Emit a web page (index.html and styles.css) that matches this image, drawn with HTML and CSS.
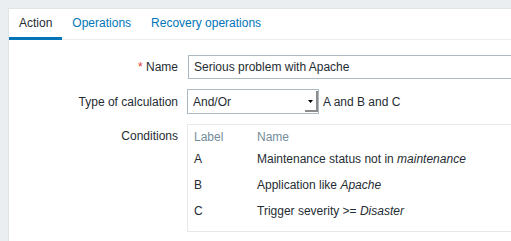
FILE: index.html
```html
<!DOCTYPE html>
<html lang="en">
<head>
  <meta charset="UTF-8" />
  <title>Action</title>
  <link rel="stylesheet" href="styles.css">
</head>
<body>
  <div class="panel">
    <ul class="tabs">
      <li class="tab active">Action</li>
      <li class="tab">Operations</li>
      <li class="tab">Recovery operations</li>
    </ul>

    <form class="form">
      <label class="form-label" for="name"><span class="required">*</span> Name</label>
      <div class="form-field">
        <input type="text" id="name" class="text-input" value="Serious problem with Apache" />
      </div>

      <label class="form-label" for="calc">Type of calculation</label>
      <div class="form-field inline">
        <div class="select-wrap">
          <select id="calc" class="select">
            <option>And/Or</option>
            <option>And</option>
            <option>Or</option>
            <option>Custom expression</option>
          </select>
          <span class="select-arrow">
            <svg width="5" height="3" viewBox="0 0 5 3"><path d="M0 0h5L2.5 3z" fill="#000"/></svg>
          </span>
        </div>
        <span class="expression">A and B and C</span>
      </div>

      <div class="form-label top">Conditions</div>
      <div class="form-field">
        <div class="conditions">
          <table>
            <thead>
              <tr><th class="col-label">Label</th><th>Name</th></tr>
            </thead>
            <tbody>
              <tr><td>A</td><td>Maintenance status not in <em>maintenance</em></td></tr>
              <tr><td>B</td><td>Application like <em>Apache</em></td></tr>
              <tr><td>C</td><td>Trigger severity &gt;= <em>Disaster</em></td></tr>
            </tbody>
          </table>
        </div>
      </div>
    </form>
  </div>
</body>
</html>
```

FILE: styles.css
```css
* {
  box-sizing: border-box;
}
html, body {
  overflow: hidden;
}
body {
  margin: 0;
  padding: 8px 0 0 8px;
  background: #ebeef0;
  font-family: 'Liberation Sans', Arial, sans-serif;
  font-size: 12px;
  color: #1f2c33;
  height: 241px;
}
.panel {
  width: 700px;
  height: 300px;
  background: #fff;
  border-top: 1px solid #dfe4e7;
  border-left: 1px solid #dfe4e7;
}
.tabs {
  list-style: none;
  margin: 0;
  padding: 0;
  display: flex;
  border-bottom: 1px solid #ebeef0;
}
.tab {
  padding: 1px 10px 0;
  line-height: 27px;
  color: #0275b8;
  border-bottom: 3px solid transparent;
  margin-bottom: -1px;
}
.tab.active {
  color: #1f2c33;
  border-bottom-color: #0275b8;
}
.form {
  display: grid;
  grid-template-columns: 169px 1fr;
  column-gap: 10px;
  row-gap: 10px;
  padding-top: 15px;
}
.form-label {
  text-align: right;
  align-self: center;
  line-height: 14px;
}
.form-label.top {
  align-self: start;
  padding-top: 5px;
}
.required {
  color: #e33734;
}
.form-field.inline {
  display: flex;
  align-items: center;
  gap: 4px;
  margin-left: -1px;
}
.text-input {
  width: 453px;
  height: 24px;
  border: 1px solid #acbbc2;
  padding: 0 5px;
  font: inherit;
  color: #1f2c33;
  background: #fff;
  outline: none;
}
.select-wrap {
  position: relative;
  width: 132px;
  height: 25px;
}
.select {
  appearance: none;
  -webkit-appearance: none;
  width: 100%;
  height: 100%;
  border: 1px solid #acbbc2;
  border-radius: 0;
  padding: 0 5px;
  font: inherit;
  color: #1f2c33;
  background: #fff;
}
.select-arrow {
  position: absolute;
  top: 2px;
  right: 1px;
  width: 13px;
  height: 21px;
  display: flex;
  align-items: center;
  justify-content: center;
  border-right: 2px solid #8c8c8c;
  border-bottom: 2px solid #8c8c8c;
  background: #fff;
}
.select-arrow svg {
  display: block;
  margin-top: 1px;
}
.expression {
  line-height: 14px;
}
.conditions {
  width: 500px;
  margin-left: -1px;
  border: 1px solid #e6e9eb;
  padding: 3px 6px 7px;
}
.conditions table {
  border-collapse: collapse;
}
.conditions th {
  font-weight: normal;
  color: #768d99;
  text-align: left;
  height: 18px;
  padding: 0;
}
.conditions td {
  height: 26px;
  padding: 0;
}
.conditions .col-label {
  width: 63px;
}
```
